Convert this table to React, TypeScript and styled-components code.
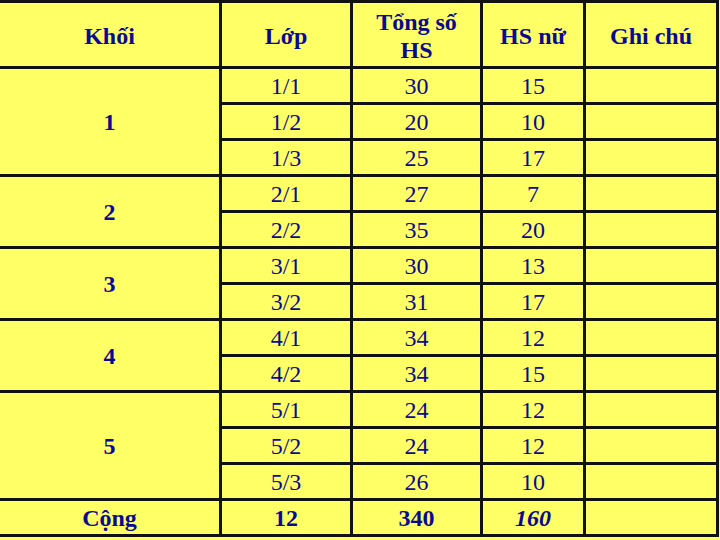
import styled, { createGlobalStyle } from "styled-components";

const GlobalStyle = createGlobalStyle`
  html, body {
    margin: 0;
    padding: 0;
    background: #ffff66;
  }
  body {
    font-family: "Liberation Serif", "Times New Roman", serif;
  }
`;

type Lop = { ten: string; tong: number; nu: number };
type Khoi = { ten: string; lop: Lop[] };

const data: Khoi[] = [
  {
    ten: "1",
    lop: [
      { ten: "1/1", tong: 30, nu: 15 },
      { ten: "1/2", tong: 20, nu: 10 },
      { ten: "1/3", tong: 25, nu: 17 },
    ],
  },
  {
    ten: "2",
    lop: [
      { ten: "2/1", tong: 27, nu: 7 },
      { ten: "2/2", tong: 35, nu: 20 },
    ],
  },
  {
    ten: "3",
    lop: [
      { ten: "3/1", tong: 30, nu: 13 },
      { ten: "3/2", tong: 31, nu: 17 },
    ],
  },
  {
    ten: "4",
    lop: [
      { ten: "4/1", tong: 34, nu: 12 },
      { ten: "4/2", tong: 34, nu: 15 },
    ],
  },
  {
    ten: "5",
    lop: [
      { ten: "5/1", tong: 24, nu: 12 },
      { ten: "5/2", tong: 24, nu: 12 },
      { ten: "5/3", tong: 26, nu: 10 },
    ],
  },
];

const App = () => {
  return (
    <Page>
      <GlobalStyle />
      <Table>
        <colgroup>
          <col style={{ width: 222 }} />
          <col style={{ width: 131 }} />
          <col style={{ width: 130 }} />
          <col style={{ width: 103 }} />
          <col />
        </colgroup>
        <thead>
          <HeadRow>
            <THead>Khối</THead>
            <THead>Lớp</THead>
            <THead>
              Tổng số
              <br />
              HS
            </THead>
            <THead>HS nữ</THead>
            <THead>Ghi chú</THead>
          </HeadRow>
        </thead>
        <tbody>
          {data.map((khoi) =>
            khoi.lop.map((lop, i) => (
              <TRow key={lop.ten}>
                {i === 0 && (
                  <TData rowSpan={khoi.lop.length} $bold>
                    {khoi.ten}
                  </TData>
                )}
                <TData>{lop.ten}</TData>
                <TData>{lop.tong}</TData>
                <TData>{lop.nu}</TData>
                <TData />
              </TRow>
            ))
          )}
          <TRow>
            <TData $bold>Cộng</TData>
            <TData $bold>12</TData>
            <TData $bold>340</TData>
            <TData $bold $italic>
              160
            </TData>
            <TData />
          </TRow>
        </tbody>
      </Table>
    </Page>
  );
};

const Page = styled.div`
  width: 720px;
  height: 540px;
  overflow: hidden;
  background: #ffff66;
`;

const Table = styled.table`
  width: 722px;
  margin-left: -3px;
  border-collapse: collapse;
  table-layout: fixed;
  color: #0a0a90;
  font-size: 24px;

  & td,
  & th {
    border: 3px solid #111111;
    padding: 0;
    text-align: center;
    vertical-align: middle;
  }
`;

const HeadRow = styled.tr`
  height: 66px;
`;

const THead = styled.th`
  font-weight: 700;
  line-height: 28px;
  padding-top: 3px !important;
`;

const TRow = styled.tr`
  height: 36px;
`;

const TData = styled.td<{ $bold?: boolean; $italic?: boolean }>`
  font-weight: ${(p) => (p.$bold ? 700 : 400)};
  font-style: ${(p) => (p.$italic ? "italic" : "normal")};
  line-height: 30px;
  padding-top: 1px !important;
`;

export default App;
